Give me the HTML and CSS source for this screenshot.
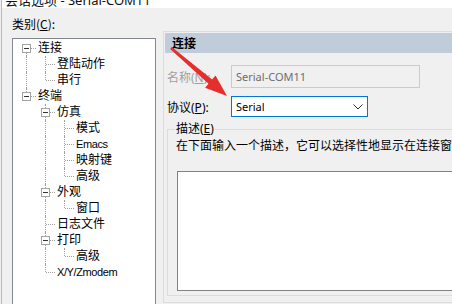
FILE: index.html
```html
<!DOCTYPE html>
<html lang="zh-CN">
<head>
<meta charset="utf-8">
<title>会话选项</title>
<link rel="stylesheet" href="styles.css">
</head>
<body>
<div class="win">
  <div class="titlebar"><span class="title">会话选项 - Serial-COM11</span></div>
  <div class="main">
    <div class="left">
      <div class="cat-label">类别(<u>C</u>):</div>
      <div class="tree">
        <div class="row"><span class="cell xf"><span class="box"></span></span><span class="txt">连接</span></div>
        <div class="row"><span class="cell v"></span><span class="cell t"></span><span class="txt">登陆动作</span></div>
        <div class="row"><span class="cell v"></span><span class="cell l"></span><span class="txt">串行</span></div>
        <div class="row"><span class="cell xl"><span class="box"></span></span><span class="txt">终端</span></div>
        <div class="row"><span class="cell"></span><span class="cell xt"><span class="box"></span></span><span class="txt">仿真</span></div>
        <div class="row"><span class="cell"></span><span class="cell v"></span><span class="cell t"></span><span class="txt">模式</span></div>
        <div class="row"><span class="cell"></span><span class="cell v"></span><span class="cell t"></span><span class="txt lat">Emacs</span></div>
        <div class="row"><span class="cell"></span><span class="cell v"></span><span class="cell t"></span><span class="txt">映射键</span></div>
        <div class="row"><span class="cell"></span><span class="cell v"></span><span class="cell l"></span><span class="txt">高级</span></div>
        <div class="row"><span class="cell"></span><span class="cell xt"><span class="box"></span></span><span class="txt">外观</span></div>
        <div class="row"><span class="cell"></span><span class="cell v"></span><span class="cell l"></span><span class="txt">窗口</span></div>
        <div class="row"><span class="cell"></span><span class="cell t"></span><span class="txt">日志文件</span></div>
        <div class="row"><span class="cell"></span><span class="cell xt"><span class="box"></span></span><span class="txt">打印</span></div>
        <div class="row"><span class="cell"></span><span class="cell v"></span><span class="cell l"></span><span class="txt">高级</span></div>
        <div class="row"><span class="cell"></span><span class="cell l"></span><span class="txt lat">X/Y/Zmodem</span></div>
      </div>
    </div>
    <div class="panel">
      <div class="hdr">连接</div>
      <div class="frow name-row">
        <span class="flabel disabled">名称(<u>N</u>):</span>
        <div class="textbox">Serial-COM11</div>
      </div>
      <div class="frow proto-row">
        <span class="flabel">协议(<u>P</u>):</span>
        <div class="select">
          <span class="sel-text">Serial</span>
          <svg class="chev" width="10" height="6" viewBox="0 0 10 6"><path d="M0.5 0.5 L5 5 L9.5 0.5" fill="none" stroke="#333" stroke-width="1"/></svg>
        </div>
      </div>
      <fieldset class="grp">
        <legend>描述(<u>E</u>)</legend>
        <div class="desc">在下面输入一个描述，它可以选择性地显示在连接窗口中。</div>
        <div class="textarea"></div>
      </fieldset>
    </div>
  </div>
</div>
<svg class="arrow" width="452" height="304" viewBox="0 0 452 304">
  <polygon points="171.8,47.1 212.1,79.6 215.5,75.6 227,96 205.1,87.8 208.5,83.8 170.2,48.9" fill="#e62e2b"/>
</svg>
</body>
</html>
```

FILE: styles.css
```css
html, body {
  margin: 0;
  padding: 0;
  width: 452px;
  height: 304px;
  overflow: hidden;
  background: #f0f0f0;
}

body {
  position: relative;
  font-family: "Noto Sans", "Noto Sans CJK SC", sans-serif;
  font-size: 12px;
  color: #000;
}

u { text-decoration: underline; text-underline-offset: 1px; }

.win {
  height: 304px;
  margin-left: 1px;
  border-left: 1px solid #b9b9b9;
  display: flex;
  flex-direction: column;
}

.titlebar {
  height: 8px;
  background: #fff;
  overflow: hidden;
  flex-shrink: 0;
}

.title {
  display: block;
  margin-top: -8px;
  padding-left: 3px;
  line-height: 16px;
  font-size: 13px;
  color: #111;
  white-space: nowrap;
}

.main {
  flex: 1;
  display: flex;
  min-height: 0;
}

.left {
  padding-left: 10px;
  width: 144px;
  flex-shrink: 0;
  display: flex;
  flex-direction: column;
}

.cat-label {
  margin-top: 8px;
  line-height: 16px;
  margin-bottom: 6px;
  font-family: "Noto Sans CJK SC", sans-serif;
}

.tree {
  flex: 1;
  background: #fff;
  border: 1px solid #828790;
  border-bottom: none;
  padding: 1px 0 0 4px;
  font-family: "Liberation Sans", "Noto Sans CJK SC", sans-serif;
  font-size: 12px;
}

.row {
  display: flex;
  height: 16px;
  line-height: 16px;
  white-space: nowrap;
}

.cell {
  position: relative;
  width: 19px;
  height: 16px;
  flex-shrink: 0;
}

.cell.v::before,
.cell.t::before,
.cell.l::before,
.cell.xt::before,
.cell.xl::before,
.cell.xf::before {
  content: "";
  position: absolute;
  left: 9px;
  width: 0;
  border-left: 1px dotted #a0a0a0;
}

.cell.v::before, .cell.t::before, .cell.xt::before { top: 0; bottom: 0; }
.cell.l::before, .cell.xl::before { top: 0; height: 8px; }
.cell.xf::before { top: 8px; bottom: 0; }

.cell.t::after,
.cell.l::after,
.cell.xt::after,
.cell.xl::after,
.cell.xf::after {
  content: "";
  position: absolute;
  left: 10px;
  right: 0;
  top: 8px;
  height: 0;
  border-top: 1px dotted #a0a0a0;
}

.box {
  position: absolute;
  left: 5px;
  top: 4px;
  width: 9px;
  height: 9px;
  box-sizing: border-box;
  border: 1px solid #a3a3a3;
  background: #fff;
  z-index: 1;
}

.box::after {
  content: "";
  position: absolute;
  left: 1px;
  top: 3px;
  width: 5px;
  height: 1px;
  background: #333;
}

.txt {
  padding-left: 2px;
}

.txt.lat {
  font-size: 11px;
  letter-spacing: -0.4px;
}

.panel {
  flex-shrink: 0;
  width: 320px;
  margin-left: 7px;
  margin-top: 23px;
  align-self: flex-start;
  border: 1px solid #dcdcdc;
  padding: 1px 0 0 1px;
  font-family: "Noto Sans", "Noto Sans CJK SC", sans-serif;
}

.hdr {
  height: 20px;
  line-height: 20px;
  background: #bfcddb;
  padding-left: 7px;
  font-weight: bold;
  font-family: "Noto Sans CJK SC", sans-serif;
}

.frow {
  display: flex;
  align-items: center;
  padding-left: 2px;
}

.name-row { margin-top: 12px; height: 23px; }
.proto-row { margin-top: 8px; height: 21px; }

.flabel {
  width: 64px;
  flex-shrink: 0;
}

.flabel.disabled { color: #a0a0a0; }

.textbox {
  width: 189px;
  height: 23px;
  box-sizing: border-box;
  border: 1px solid #cbcbcb;
  background: #f0f0f0;
  color: #6d6d6d;
  font-size: 11px;
  line-height: 21px;
  padding-left: 4px;
}

.select {
  width: 137px;
  height: 21px;
  box-sizing: border-box;
  border: 1px solid #0078d7;
  background: #fff;
  display: flex;
  align-items: center;
  justify-content: space-between;
  padding: 0 4px 0 4px;
  font-size: 11px;
}

.chev { margin-right: 0; }

.grp {
  margin: 5px 0 6px 2px;
  width: 300px;
  border: 1px solid #dcdcdc;
  padding: 0 0 4px 8px;
  min-width: 0;
}

.grp legend {
  padding: 0 1px;
  margin-left: -1px;
  line-height: 14px;
  font-size: 12px;
}

.desc {
  margin-top: 1px;
  line-height: 16px;
  white-space: nowrap;
  font-family: "Noto Sans CJK SC", sans-serif;
}

.textarea {
  margin-top: 18px;
  margin-left: 1px;
  width: 300px;
  height: 120px;
  box-sizing: border-box;
  border: 1px solid #828282;
  background: #fff;
}

.arrow {
  position: absolute;
  left: 0;
  top: 0;
  pointer-events: none;
}
```
